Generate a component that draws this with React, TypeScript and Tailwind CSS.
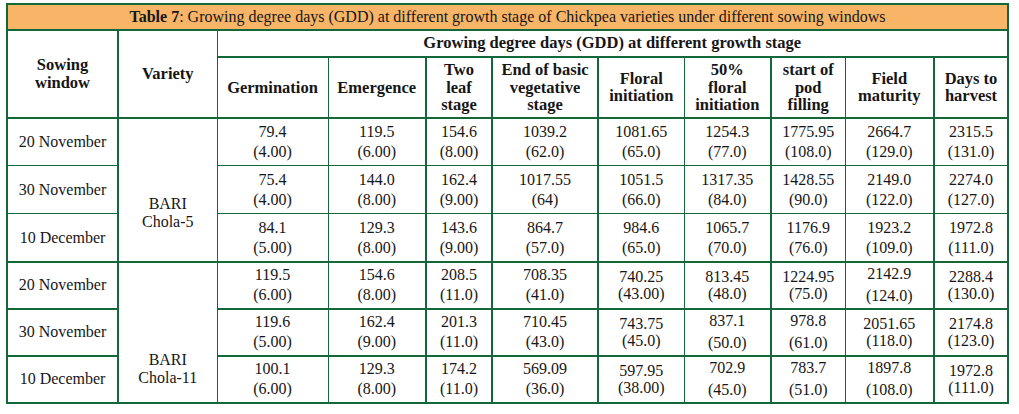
const GREEN = 'border-[#13683a]';

type Val = [string, string, number?];

const groups: { variety: string[]; pad: string; rows: { sow: string; vals: Val[] }[] }[] = [
  {
    variety: ['BARI', 'Chola-5'],
    pad: 'pt-[76px]',
    rows: [
      { sow: '20 November', vals: [['79.4', '(4.00)'], ['119.5', '(6.00)'], ['154.6', '(8.00)'], ['1039.2', '(62.0)'], ['1081.65', '(65.0)'], ['1254.3', '(77.0)'], ['1775.95', '(108.0)'], ['2664.7', '(129.0)'], ['2315.5', '(131.0)']] },
      { sow: '30 November', vals: [['75.4', '(4.00)'], ['144.0', '(8.00)'], ['162.4', '(9.00)'], ['1017.55', '(64)'], ['1051.5', '(66.0)'], ['1317.35', '(84.0)'], ['1428.55', '(90.0)'], ['2149.0', '(122.0)'], ['2274.0', '(127.0)']] },
      { sow: '10 December', vals: [['84.1', '(5.00)'], ['129.3', '(8.00)'], ['143.6', '(9.00)'], ['864.7', '(57.0)'], ['984.6', '(65.0)'], ['1065.7', '(70.0)'], ['1176.9', '(76.0)'], ['1923.2', '(109.0)'], ['1972.8', '(111.0)']] },
    ],
  },
  {
    variety: ['BARI', 'Chola-11'],
    pad: 'pt-[88px]',
    rows: [
      { sow: '20 November', vals: [['119.5', '(6.00)'], ['154.6', '(8.00)'], ['208.5', '(11.0)'], ['708.35', '(41.0)'], ['740.25', '(43.00)', 1], ['813.45', '(48.0)', 1], ['1224.95', '(75.0)', 1], ['2142.9', '(124.0)', 2], ['2288.4', '(130.0)', 1]] },
      { sow: '30 November', vals: [['119.6', '(5.00)'], ['162.4', '(9.00)'], ['201.3', '(11.0)'], ['710.45', '(43.0)'], ['743.75', '(45.0)', 1], ['837.1', '(50.0)', 2], ['978.8', '(61.0)', 2], ['2051.65', '(118.0)', 1], ['2174.8', '(123.0)', 1]] },
      { sow: '10 December', vals: [['100.1', '(6.00)'], ['129.3', '(8.00)'], ['174.2', '(11.0)'], ['569.09', '(36.0)'], ['597.95', '(38.00)', 1], ['702.9', '(45.0)', 2], ['783.7', '(51.0)', 2], ['1897.8', '(108.0)', 2], ['1972.8', '(111.0)', 1]] },
    ],
  },
];

// right border of each data column (Germination .. Days to harvest)
const colRight = [
  'border-r',
  'border-r-2',
  'border-r-2',
  'border-r-2',
  'border-r',
  'border-r-2',
  'border-r',
  'border-r-2',
  'border-r-2',
];

const heads: string[][] = [
  ['Germination'],
  ['Emergence'],
  ['Two', 'leaf', 'stage'],
  ['End of basic', 'vegetative', 'stage'],
  ['Floral', 'initiation'],
  ['50%', 'floral', 'initiation'],
  ['start of', 'pod', 'filling'],
  ['Field', 'maturity'],
  ['Days to', 'harvest'],
];

const widths = ['w-[111px]', 'w-[99px]', 'w-[111px]', 'w-[98px]', 'w-[66px]', 'w-[106px]', 'w-[86px]', 'w-[87px]', 'w-[74px]', 'w-[89px]', 'w-[74px]'];

function Cell({ v }: { v: Val }) {
  const lead = v[2] === 1 ? 'leading-[17px]' : v[2] === 2 ? 'leading-[22px]' : 'leading-[20px]';
  return (
    <div className={lead}>
      <div>{v[0]}</div>
      <div>{v[1]}</div>
    </div>
  );
}

export default function App() {
  return (
    <div className="min-h-screen bg-white pl-[6px] pt-[3px]" style={{ fontFamily: '"Liberation Serif", serif' }}>
      <table className={`table-fixed border-collapse w-[1003px] text-[16px] text-[#161616] border-2 ${GREEN}`}>
        <colgroup>
          {widths.map((w, i) => (
            <col key={i} className={w} />
          ))}
        </colgroup>
        <tbody>
          <tr className="h-[26px]">
            <td colSpan={11} className={`bg-[#f8b567] text-center border-2 ${GREEN} text-[16px] p-0`}>
              <span className="font-bold">Table 7</span>: Growing degree days (GDD) at different growth stage of Chickpea varieties under different sowing windows
            </td>
          </tr>
          <tr className="h-[26px]">
            <th rowSpan={2} className={`font-bold text-[16.5px] border-2 ${GREEN} leading-[17.5px] align-middle`}>
              Sowing
              <br />
              window
            </th>
            <th rowSpan={2} className={`font-bold text-[16.5px] border-y-2 border-l-2 border-r ${GREEN} align-middle`}>
              Variety
            </th>
            <th colSpan={9} className={`font-bold text-[16.5px] border-b-2 ${GREEN} p-0`}>
              Growing degree days (GDD) at different growth stage
            </th>
          </tr>
          <tr className="h-[61px]">
            {heads.map((h, i) => (
              <th key={i} className={`font-bold text-[16.5px] border-b-2 ${colRight[i]} ${GREEN} leading-[17.5px] align-middle p-0`}>
                {h.map((l, j) => (
                  <div key={j}>{l}</div>
                ))}
              </th>
            ))}
          </tr>
          {groups.map((g, gi) =>
            g.rows.map((r, ri) => {
              const rowB = gi === 1 || ri === 2 ? 'border-b-2' : 'border-b';
              return (
                <tr key={`${gi}-${ri}`} className={gi === 0 ? 'h-[48px]' : 'h-[47px]'}>
                  <td className={`text-center border-r-2 ${rowB} ${GREEN} p-0`}>{r.sow}</td>
                  {ri === 0 && (
                    <td rowSpan={3} className={`text-center align-top leading-[18px] border-l-2 border-r border-b-2 ${GREEN} ${g.pad} pb-0`}>
                      {g.variety.map((l, j) => (
                        <div key={j}>{l}</div>
                      ))}
                    </td>
                  )}
                  {r.vals.map((v, ci) => (
                    <td key={ci} className={`text-center align-middle ${rowB} ${colRight[ci]} ${GREEN} p-0`}>
                      <Cell v={v} />
                    </td>
                  ))}
                </tr>
              );
            })
          )}
        </tbody>
      </table>
    </div>
  );
}
